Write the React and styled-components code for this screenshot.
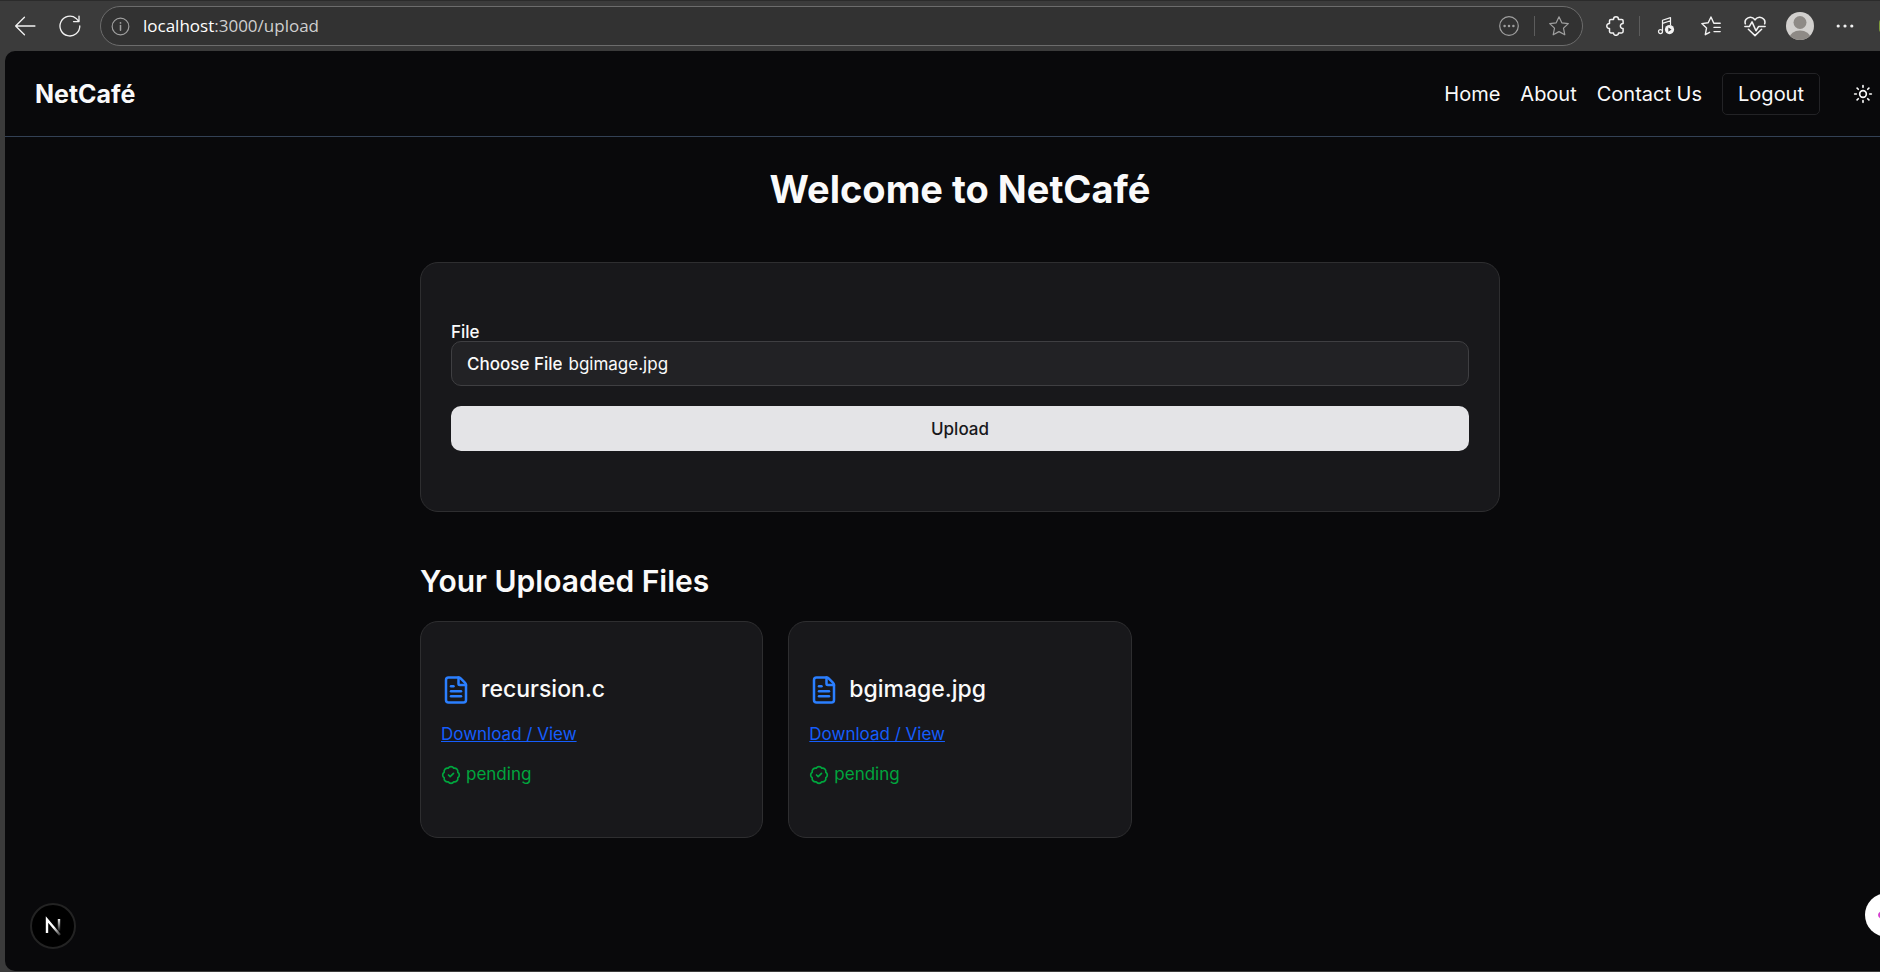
import React, { useEffect, useRef } from 'react';
import styled, { createGlobalStyle } from 'styled-components';
import { BadgeCheck, FileText, Sun } from 'lucide-react';

const GlobalStyle = createGlobalStyle`
  *, *::before, *::after { box-sizing: border-box; }
  body {
    margin: 0;
    background: #3b3b3b;
    color: #fafafa;
    font-family: Inter, "Liberation Sans", sans-serif;
  }
  h1, h2, h3, p { margin: 0; }
  button, input { font: inherit; color: inherit; }
  svg { display: block; flex: none; }
`;

const Shell = styled.div`
  display: flex;
  flex-direction: column;
  min-height: 100vh;
  background: #3b3b3b;
  overflow: hidden;
`;

/* Browser bar */

const BrowserBar = styled.header`
  display: flex;
  align-items: center;
  height: 51px;
  flex: none;
  padding: 0 0 0 12px;
  border-top: 1px solid #2b2b2b;
  overflow: hidden;
`;

const BarButton = styled.button`
  display: flex;
  align-items: center;
  justify-content: center;
  width: ${(p) => p.$width || 50}px;
  height: 32px;
  flex: none;
  padding: 0;
  border: 0;
  background: none;
  color: ${(p) => (p.$muted ? '#a0a0a0' : '#f2f2f2')};
`;

const History = styled.div`
  display: flex;
  gap: 19px;
  margin-right: 17px;
`;

const AddressBar = styled.div`
  display: flex;
  align-items: center;
  flex: 1;
  height: 40px;
  padding: 0 0 0 10px;
  border: 1px solid #6c6c6c;
  border-radius: 20px;
  background: #323232;
`;

const Address = styled.div`
  flex: 1;
  margin-left: 13px;
  font-family: "Open Sans", "Noto Sans", sans-serif;
  font-size: 17px;
  line-height: 24px;
  color: #cfcfcf;

  span { color: #ffffff; }
`;

const Divider = styled.span`
  width: 1px;
  height: 20px;
  background: #5c5c5c;
`;

const Extensions = styled.div`
  display: flex;
  align-items: center;
  margin-left: 9px;
`;

const NextProfile = styled.span`
  width: 8px;
  height: 14px;
  flex: none;
  margin-left: 9px;
  margin-right: -7px;
  border-radius: 7px;
  background: #7d9a3a;
`;

/* Web page: a little wider than the window, so its right edge is cut off */

const Viewport = styled.div`
  position: relative;
  display: flex;
  flex-direction: column;
  flex: 1;
  margin: 0 -35px 1px 5px;
  border-radius: 10px 0 0 10px;
  background: #09090b;
  overflow: hidden;
`;

const SiteHeader = styled.div`
  display: flex;
  align-items: center;
  justify-content: space-between;
  height: 86px;
  padding: 0 42px 0 30px;
  border-bottom: 1px solid #334155;
`;

const Brand = styled.a`
  font-size: 25px;
  line-height: 34px;
  font-weight: 700;
  color: inherit;
  text-decoration: none;
`;

const Nav = styled.nav`
  display: flex;
  align-items: center;
  gap: 20px;
  font-size: 20px;
  line-height: 30px;
`;

const NavLink = styled.a`
  color: inherit;
  text-decoration: none;
`;

const LogoutButton = styled.button`
  height: 42px;
  padding: 0 15px;
  border: 1px solid #232326;
  border-radius: 5px;
  background: none;
`;

const ThemeButton = styled.button`
  display: flex;
  padding: 0;
  margin-left: 13px;
  border: 0;
  background: none;
`;

const Main = styled.main`
  width: 100%;
  max-width: 1080px;
  margin: 0 auto;
  padding: 30px 0;
`;

const Title = styled.h1`
  font-size: 38px;
  line-height: 45px;
  font-weight: 700;
  text-align: center;
`;

const Card = styled.div`
  border: 1px solid #2e2e30;
  border-radius: 18px;
  background: #18181b;
`;

const UploadForm = styled(Card).attrs({ as: 'form' })`
  display: flex;
  flex-direction: column;
  margin-top: 50px;
  padding: 60px 30px;
  font-size: 17px;
`;

const FieldLabel = styled.label`
  font-weight: 500;
  line-height: 18px;
`;

const FileInput = styled.input`
  width: 100%;
  height: 45px;
  padding: 0 15px;
  border: 1px solid #3f3f42;
  border-radius: 10px;
  background: #222225;
  line-height: 45px;

  &::file-selector-button {
    height: 43px;
    margin: 0 6px 0 0;
    padding: 0;
    border: 0;
    background: none;
    color: inherit;
    font: inherit;
    font-weight: 500;
  }
`;

const SubmitButton = styled.button`
  height: 45px;
  margin-top: 20px;
  border: 0;
  border-radius: 10px;
  background: #e4e4e7;
  color: #18181b;
  font-weight: 500;
`;

const SectionTitle = styled.h2`
  margin: 49px 0 20px;
  font-size: 30px;
  line-height: 40px;
  font-weight: 600;
`;

const FileGrid = styled.div`
  display: grid;
  grid-template-columns: repeat(3, 1fr);
  gap: 25px;
`;

const FileCard = styled(Card)`
  display: flex;
  flex-direction: column;
  align-items: flex-start;
  gap: 15px;
  padding: 50px 20px;
  font-size: 17px;
  line-height: 25px;
`;

const FileHeading = styled.div`
  display: flex;
  align-items: center;
  gap: 10px;
  color: #2b7fff;
`;

const FileName = styled.h3`
  color: #fafafa;
  font-size: 23px;
  line-height: 35px;
  font-weight: 500;
`;

const DownloadLink = styled.a`
  color: #155dfc;
  text-decoration: underline;
`;

const Status = styled.p`
  display: flex;
  align-items: center;
  gap: 5px;
  color: #00a63e;
`;

const DevBadge = styled.button`
  position: absolute;
  left: 25px;
  bottom: 22px;
  display: flex;
  align-items: center;
  justify-content: center;
  width: 46px;
  height: 46px;
  padding: 0;
  border: 2px solid #232323;
  border-radius: 50%;
  background: #000000;
`;

const FloatingButton = styled.button`
  position: absolute;
  right: 6px;
  bottom: 34px;
  display: flex;
  align-items: center;
  justify-content: center;
  width: 44px;
  height: 44px;
  padding: 0;
  border: 0;
  border-radius: 50%;
  background: #ffffff;
`;

const Line = ({ size = 20, children, weight = 1.2 }) => (
  <svg width={size} height={size} viewBox="0 0 20 20" fill="none" stroke="currentColor" strokeWidth={weight} strokeLinecap="round" strokeLinejoin="round" aria-hidden="true">
    {children}
  </svg>
);

const BackIcon = () => (
  <Line size={22}><path d="M19 10H1.5M9.5 2 1.5 10l8 8" /></Line>
);

const ReloadIcon = () => (
  <Line size={22}><path d="M18.9 10A9 9 0 1 1 15.6 3.1M18.2 1v5h-5M18 5.8 15.6 3.1" /></Line>
);

const InfoIcon = () => (
  <Line size={19}>
    <circle cx="10" cy="10" r="8.8" />
    <path d="M10 9v5" strokeWidth="1.6" />
    <path d="M10 6.1v.1" strokeWidth="1.8" />
  </Line>
);

const MoreCircleIcon = () => (
  <Line>
    <circle cx="10" cy="10" r="9.3" />
    <path d="M5.6 10h.01M10 10h.01M14.4 10h.01" strokeWidth="2.5" />
  </Line>
);

const StarIcon = () => (
  <Line><path d="m10 .8 2.8 6 6.5.8-4.8 4.5 1.3 6.7L10 15.6l-5.8 3.2 1.3-6.7L.7 7.6l6.5-.8z" /></Line>
);

const PuzzleIcon = () => (
  <Line>
    <path strokeWidth="1.5" d="M4.9 3.4h2.6c0-3.5 5-3.5 5 0h3.2q1.4 0 1.4 1.4v2.6c-3.6-.2-3.6 5.4 0 5.2v2.9q0 1.4-1.4 1.4h-3.2c0 3.2-5 3.2-5 0H4.9q-1.4 0-1.4-1.4v-2.9c-3.6.1-3.6-5.2 0-5.1V4.8q0-1.4 1.4-1.4" />
  </Line>
);

const MusicIcon = () => (
  <Line>
    <path d="M6.5 15.3V4.2L14.5 1.6v7M6.5 7.4 14.5 4.8" />
    <circle cx="4.5" cy="15.6" r="2" />
    <circle cx="13.5" cy="13.6" r="4.6" fill="currentColor" stroke="none" />
    <path d="m12.3 11.5 3.2 2.1-3.2 2.1z" fill="#3b3b3b" stroke="none" />
  </Line>
);

const FavoritesIcon = () => (
  <Line>
    <path strokeWidth="1.4" d="M19.2 7.2h-6.4L10 1 7.2 6.8.8 7.6l4.7 4.5-1.2 6.6 4.3-2.4M13 11.4h6.2M13 15.6h6.2" />
  </Line>
);

const HealthIcon = () => (
  <Line size={22}>
    <path strokeWidth="1.4" d="M1.2 8C-.2 3.2 6.2-.4 10 4.4c3.8-4.8 10.2-1.2 8.8 3.6M4 13l6 5.7 6-5.7M.8 10.5h4l2.5-4.2 3.6 8 2.3-3.8h6" />
  </Line>
);

const MoreIcon = () => (
  <Line><path d="M3.2 10h.01M10 10h.01M16.8 10h.01" strokeWidth="3.2" /></Line>
);

const Avatar = () => (
  <svg width="28" height="28" viewBox="0 0 28 28" aria-hidden="true">
    <defs><clipPath id="avatar"><circle cx="14" cy="14" r="14" /></clipPath></defs>
    <g clipPath="url(#avatar)">
      <rect width="28" height="28" fill="#d2d0ce" />
      <circle cx="14" cy="10.5" r="6.5" fill="#8e8a86" />
      <ellipse cx="14" cy="26" rx="10.5" ry="7.5" fill="#8e8a86" />
    </g>
  </svg>
);

const NextMark = () => (
  <svg width="18" height="20" viewBox="0 0 18 20" fill="none" aria-hidden="true">
    <defs>
      <linearGradient id="stem" x1="0" y1="2" x2="0" y2="16" gradientUnits="userSpaceOnUse">
        <stop stopColor="#fff" /><stop offset="1" stopColor="#fff" stopOpacity="0" />
      </linearGradient>
      <linearGradient id="slant" x1="10" y1="11" x2="16" y2="19" gradientUnits="userSpaceOnUse">
        <stop stopColor="#fff" /><stop offset="1" stopColor="#fff" stopOpacity="0.2" />
      </linearGradient>
    </defs>
    <path d="M3 17V3.5L16 19" stroke="url(#slant)" strokeWidth="2.4" />
    <path d="M15 3v12" stroke="url(#stem)" strokeWidth="2.4" />
  </svg>
);

const SparkMark = () => (
  <svg width="18" height="18" viewBox="0 0 18 18" aria-hidden="true">
    <ellipse cx="9" cy="9" rx="9" ry="5" fill="#d63fd0" />
  </svg>
);

const files = ['recursion.c', 'bgimage.jpg'];

function FilePicker({ id, fileName }) {
  const ref = useRef(null);
  useEffect(() => {
    const transfer = new DataTransfer();
    transfer.items.add(new File([''], fileName, { type: 'image/jpeg' }));
    ref.current.files = transfer.files;
  }, [fileName]);
  return <FileInput ref={ref} id={id} type="file" />;
}

export default function App() {
  return (
    <Shell>
      <GlobalStyle />
      <BrowserBar>
        <History>
          <BarButton $width={26} aria-label="Back"><BackIcon /></BarButton>
          <BarButton $width={26} aria-label="Reload"><ReloadIcon /></BarButton>
        </History>
        <AddressBar>
          <BarButton $width={19} $muted aria-label="Site information"><InfoIcon /></BarButton>
          <Address><span>localhost</span>:3000/upload</Address>
          <BarButton $muted aria-label="Page options"><MoreCircleIcon /></BarButton>
          <Divider />
          <BarButton $width={47} $muted aria-label="Add to favorites"><StarIcon /></BarButton>
        </AddressBar>
        <Extensions>
          <BarButton $width={47} aria-label="Extensions"><PuzzleIcon /></BarButton>
          <Divider />
          <BarButton $width={52} aria-label="Media"><MusicIcon /></BarButton>
          <BarButton $width={38} aria-label="Favorites"><FavoritesIcon /></BarButton>
          <BarButton aria-label="Browser essentials"><HealthIcon /></BarButton>
          <BarButton $width={40} aria-label="Profile"><Avatar /></BarButton>
          <BarButton aria-label="Settings and more"><MoreIcon /></BarButton>
          <NextProfile />
        </Extensions>
      </BrowserBar>

      <Viewport>
        <SiteHeader>
          <Brand href="#">NetCafé</Brand>
          <Nav>
            <NavLink href="#home">Home</NavLink>
            <NavLink href="#about">About</NavLink>
            <NavLink href="#contact">Contact Us</NavLink>
            <LogoutButton>Logout</LogoutButton>
            <ThemeButton aria-label="Toggle theme"><Sun size={20} /></ThemeButton>
          </Nav>
        </SiteHeader>

        <Main>
          <Title>Welcome to NetCafé</Title>
          <UploadForm>
            <FieldLabel htmlFor="file">File</FieldLabel>
            <FilePicker id="file" fileName="bgimage.jpg" />
            <SubmitButton type="button">Upload</SubmitButton>
          </UploadForm>

          <SectionTitle>Your Uploaded Files</SectionTitle>
          <FileGrid>
            {files.map((name) => (
              <FileCard key={name}>
                <FileHeading>
                  <FileText size={30} />
                  <FileName>{name}</FileName>
                </FileHeading>
                <DownloadLink href={`#${name}`}>Download / View</DownloadLink>
                <Status><BadgeCheck size={20} />pending</Status>
              </FileCard>
            ))}
          </FileGrid>
        </Main>

        <DevBadge aria-label="Open developer tools"><NextMark /></DevBadge>
        <FloatingButton aria-label="Assistant"><SparkMark /></FloatingButton>
      </Viewport>
    </Shell>
  );
}
